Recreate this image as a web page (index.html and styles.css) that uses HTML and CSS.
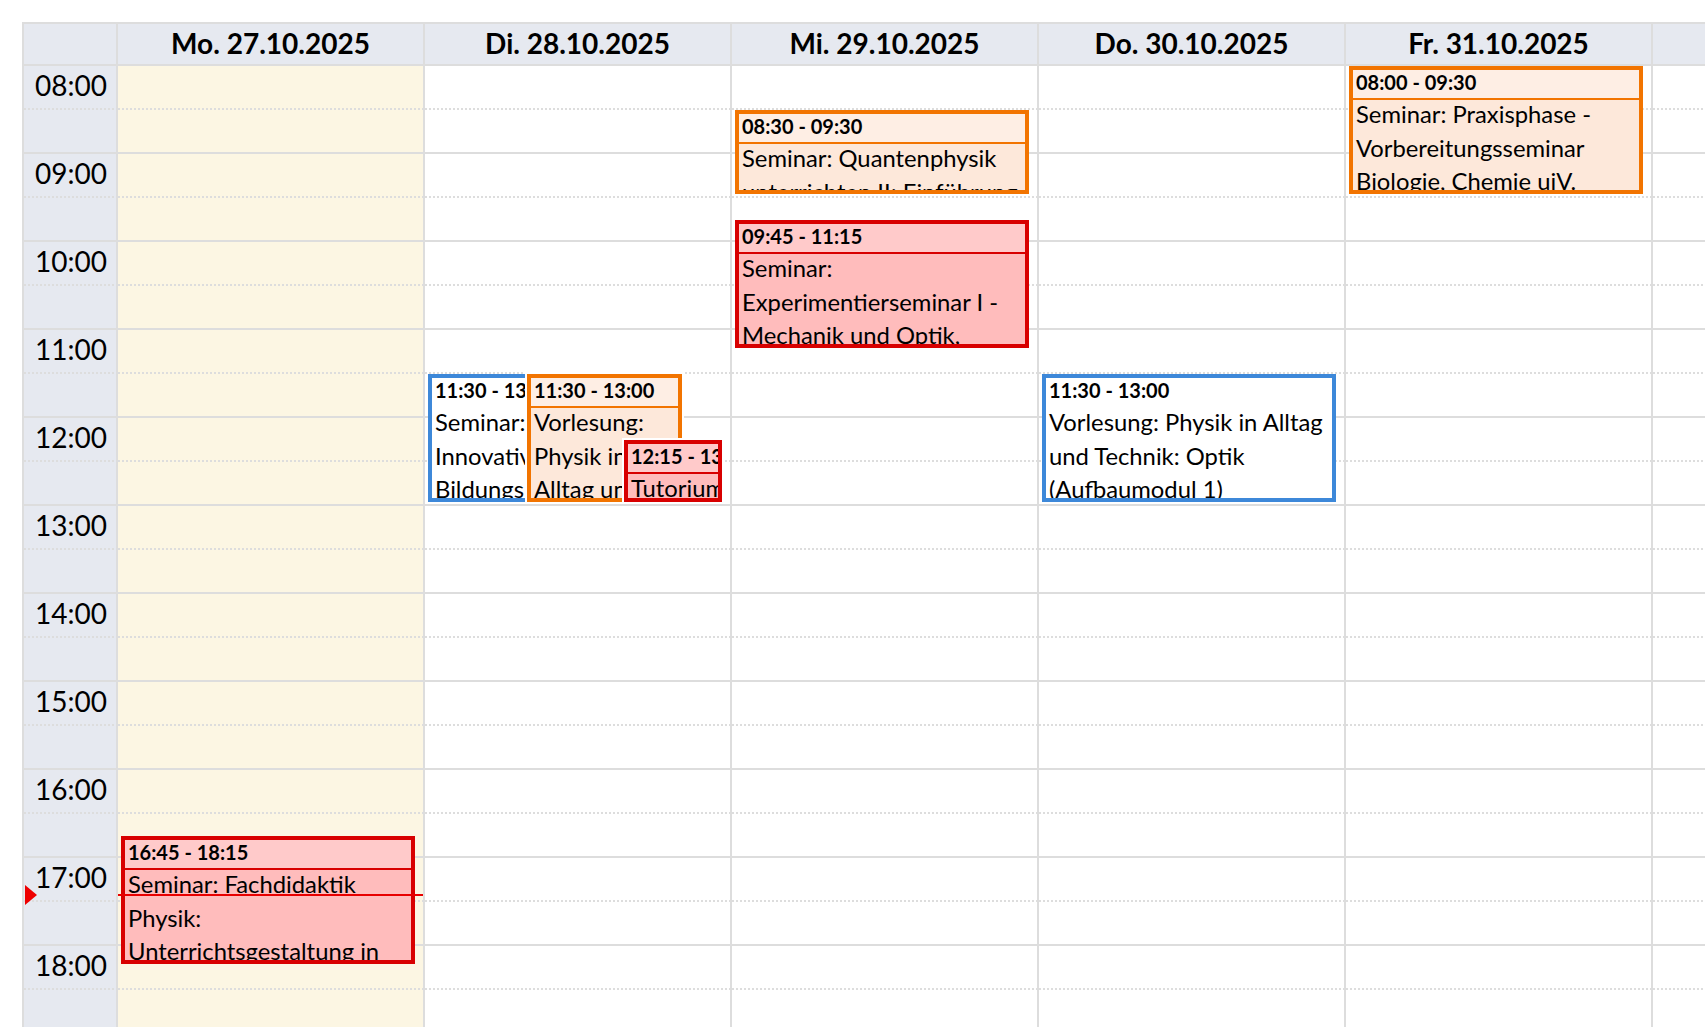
FILE: index.html
```html
<!DOCTYPE html>
<html lang="de">
<head>
<meta charset="utf-8">
<title>Stundenplan</title>
<link rel="stylesheet" href="styles.css">
</head>
<body>
<div class="cal">
  <div class="hd"></div>
  <div class="hd">Mo. 27.10.2025</div>
  <div class="hd">Di. 28.10.2025</div>
  <div class="hd">Mi. 29.10.2025</div>
  <div class="hd">Do. 30.10.2025</div>
  <div class="hd">Fr. 31.10.2025</div>
  <div class="hd">Sa. 01.11.2025</div>
  <div class="hd">So. 02.11.2025</div>

  <div class="col axis">
    <div class="lbl">08:00</div>
    <div class="lbl">09:00</div>
    <div class="lbl">10:00</div>
    <div class="lbl">11:00</div>
    <div class="lbl">12:00</div>
    <div class="lbl">13:00</div>
    <div class="lbl">14:00</div>
    <div class="lbl">15:00</div>
    <div class="lbl">16:00</div>
    <div class="lbl">17:00</div>
    <div class="lbl">18:00</div>
    <div class="lbl">19:00</div>
    <div class="now-arrow"></div>
  </div>

  <div class="col today">
    <div class="ev red" style="top:770px;height:128px">
      <div class="ev-time">16:45 - 18:15</div>
      <div class="ev-title">Seminar: Fachdidaktik Physik: Unterrichtsgestaltung in der Sekundarstufe</div>
    </div>
    <div class="now"></div>
  </div>

  <div class="col">
    <div class="ev blue" style="top:308px;height:128px;right:auto;width:150px">
      <div class="ev-time">11:30 - 13:00</div>
      <div class="ev-title">Seminar: Innovative Bildungskonzepte</div>
    </div>
    <div class="ev orange inset" style="top:308px;height:128px;left:102px;right:auto;width:155px">
      <div class="ev-time">11:30 - 13:00</div>
      <div class="ev-title">Vorlesung: Physik in Alltag und Technik: Mechanik</div>
    </div>
    <div class="ev red inset" style="top:374px;height:62px;left:199px;right:auto;width:98px">
      <div class="ev-time">12:15 - 13:00</div>
      <div class="ev-title">Tutorium Physik in Alltag und Technik</div>
    </div>
  </div>

  <div class="col">
    <div class="ev orange" style="top:44px;height:84px">
      <div class="ev-time">08:30 - 09:30</div>
      <div class="ev-title">Seminar: Quantenphysik unterrichten II: Einführung</div>
    </div>
    <div class="ev red" style="top:154px;height:128px">
      <div class="ev-time">09:45 - 11:15</div>
      <div class="ev-title">Seminar: Experimentierseminar I - Mechanik und Optik, Wärmelehre</div>
    </div>
  </div>

  <div class="col">
    <div class="ev blue" style="top:308px;height:128px">
      <div class="ev-time">11:30 - 13:00</div>
      <div class="ev-title">Vorlesung: Physik in Alltag und Technik: Optik (Aufbaumodul 1)</div>
    </div>
  </div>

  <div class="col">
    <div class="ev orange" style="top:0px;height:128px">
      <div class="ev-time">08:00 - 09:30</div>
      <div class="ev-title">Seminar: Praxisphase - Vorbereitungsseminar Biologie, Chemie uiV. Physik</div>
    </div>
  </div>

  <div class="col"></div>
  <div class="col"></div>
</div>
</body>
</html>
```

FILE: styles.css
```css
html, body {
  margin: 0;
  padding: 0;
  overflow: hidden;
  background: #ffffff;
}

body {
  font-family: Lato, "Noto Sans", "DejaVu Sans", sans-serif;
  color: #000000;
}

.cal {
  margin: 22px 0 0 22px;
  display: grid;
  grid-template-columns: 94px repeat(7, 307px);
  width: max-content;
  border-left: 2px solid #dddddd;
  border-top: 2px solid #dddddd;
}

.hd {
  height: 42px;
  box-sizing: border-box;
  padding-bottom: 2px;
  border-right: 2px solid #dddddd;
  border-bottom: 2px solid #dddddd;
  background: #e6e9f0;
  font-weight: 700;
  font-size: 28px;
  line-height: 38px;
  text-align: center;
  white-space: nowrap;
  overflow: hidden;
}

.col {
  --bg: #ffffff;
  position: relative;
  height: 1056px;
  box-sizing: border-box;
  border-right: 2px solid #dddddd;
  background:
    repeating-linear-gradient(to bottom, transparent 0 86px, #dddddd 86px 88px),
    repeating-linear-gradient(to right, transparent 0 2px, var(--bg) 2px 4px),
    repeating-linear-gradient(to bottom, transparent 0 42px, #dddddd 42px 44px, transparent 44px 88px),
    var(--bg);
}

.col.axis {
  --bg: #e6e9f0;
}

.col.today {
  --bg: #fcf6e3;
}

.lbl {
  height: 88px;
  box-sizing: border-box;
  padding: 3px 9px 0 0;
  text-align: right;
  font-size: 28px;
  line-height: 33.6px;
}

.ev {
  position: absolute;
  left: 3px;
  right: 8px;
  box-sizing: border-box;
  border: 4px solid;
  overflow: hidden;
  z-index: 1;
}

.ev.inset {
  box-shadow: 0 0 0 2px #ffffff;
}

.ev-time {
  font-weight: 700;
  font-size: 20px;
  line-height: 24px;
  padding: 0 3px 4px;
  border-bottom: 2px solid;
  white-space: nowrap;
  overflow: hidden;
}

.ev-title {
  font-size: 23.8px;
  line-height: 33.6px;
  padding: 0 3px;
  margin-top: -2px;
}

.ev.red {
  border-color: #d80000;
  background: #ffbcbc;
}
.ev.red .ev-time {
  border-color: #d80000;
  background: #ffcaca;
}

.ev.orange {
  border-color: #f27400;
  background: #fde8da;
}
.ev.orange .ev-time {
  border-color: #f27400;
  background: #feeee4;
}

.ev.blue {
  border-color: #3d88d9;
  background: #ffffff;
}
.ev.blue .ev-time {
  border-color: #ffffff;
}

.now {
  position: absolute;
  left: 0;
  right: 0;
  top: 828px;
  height: 2px;
  background: #e80000;
  z-index: 5;
}

.now-arrow {
  position: absolute;
  left: 1px;
  top: 819px;
  width: 0;
  height: 0;
  border-left: 12px solid #ee0000;
  border-top: 10px solid transparent;
  border-bottom: 10px solid transparent;
  z-index: 5;
}
```
